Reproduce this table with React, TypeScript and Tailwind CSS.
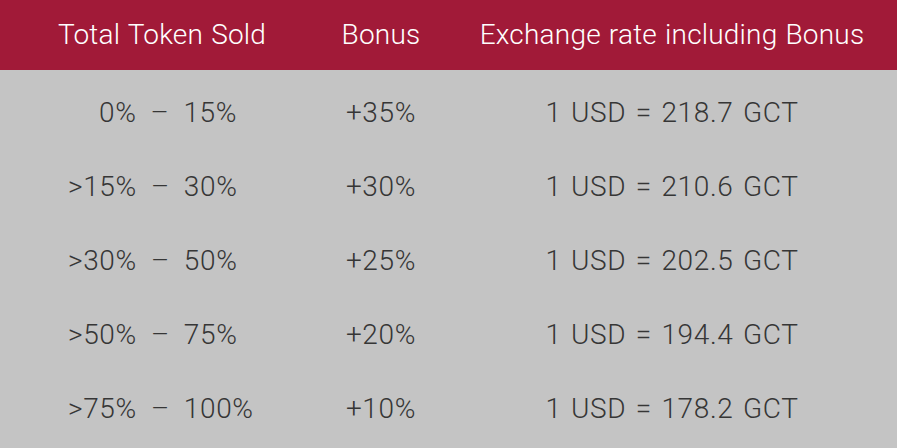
const rows = [
  { from: '0%', to: '15%', bonus: '+35%', rate: '1 USD = 218.7 GCT', indent: true },
  { from: '>15%', to: '30%', bonus: '+30%', rate: '1 USD = 210.6 GCT' },
  { from: '>30%', to: '50%', bonus: '+25%', rate: '1 USD = 202.5 GCT' },
  { from: '>50%', to: '75%', bonus: '+20%', rate: '1 USD = 194.4 GCT' },
  { from: '>75%', to: '100%', bonus: '+10%', rate: '1 USD = 178.2 GCT' },
]

export default function App() {
  return (
    <div className="w-[897px] h-[448px] bg-[#c4c4c4] flex flex-col font-['Roboto',sans-serif] font-light overflow-hidden">
      <header className="h-[70px] bg-[#a11a38] flex items-center text-white text-[28px] tracking-[0.2px] [word-spacing:1px]">
        <div className="w-[324px] text-center">Total Token Sold</div>
        <div className="w-[114px] text-center">Bonus</div>
        <div className="flex-1 text-center pl-[9px]">Exchange rate including Bonus</div>
      </header>

      <main className="flex-1 flex flex-col pt-[6px] text-[#363636] text-[28px] tracking-[0.65px] [word-spacing:2px]">
        {rows.map((r) => (
          <div key={r.rate} className="h-[74px] flex items-center">
            <div className="w-[324px] pl-[68px]">
              <span className={r.indent ? 'inline-flex gap-[14px] pl-[31px]' : 'inline-flex gap-[14px]'}>
                <span>{r.from}</span>
                <span>–</span>
                <span>{r.to}</span>
              </span>
            </div>
            <div className="w-[114px] text-center">{r.bonus}</div>
            <div className="flex-1 text-center pl-[9px] whitespace-pre">
              {r.rate}
            </div>
          </div>
        ))}
      </main>
    </div>
  )
}
